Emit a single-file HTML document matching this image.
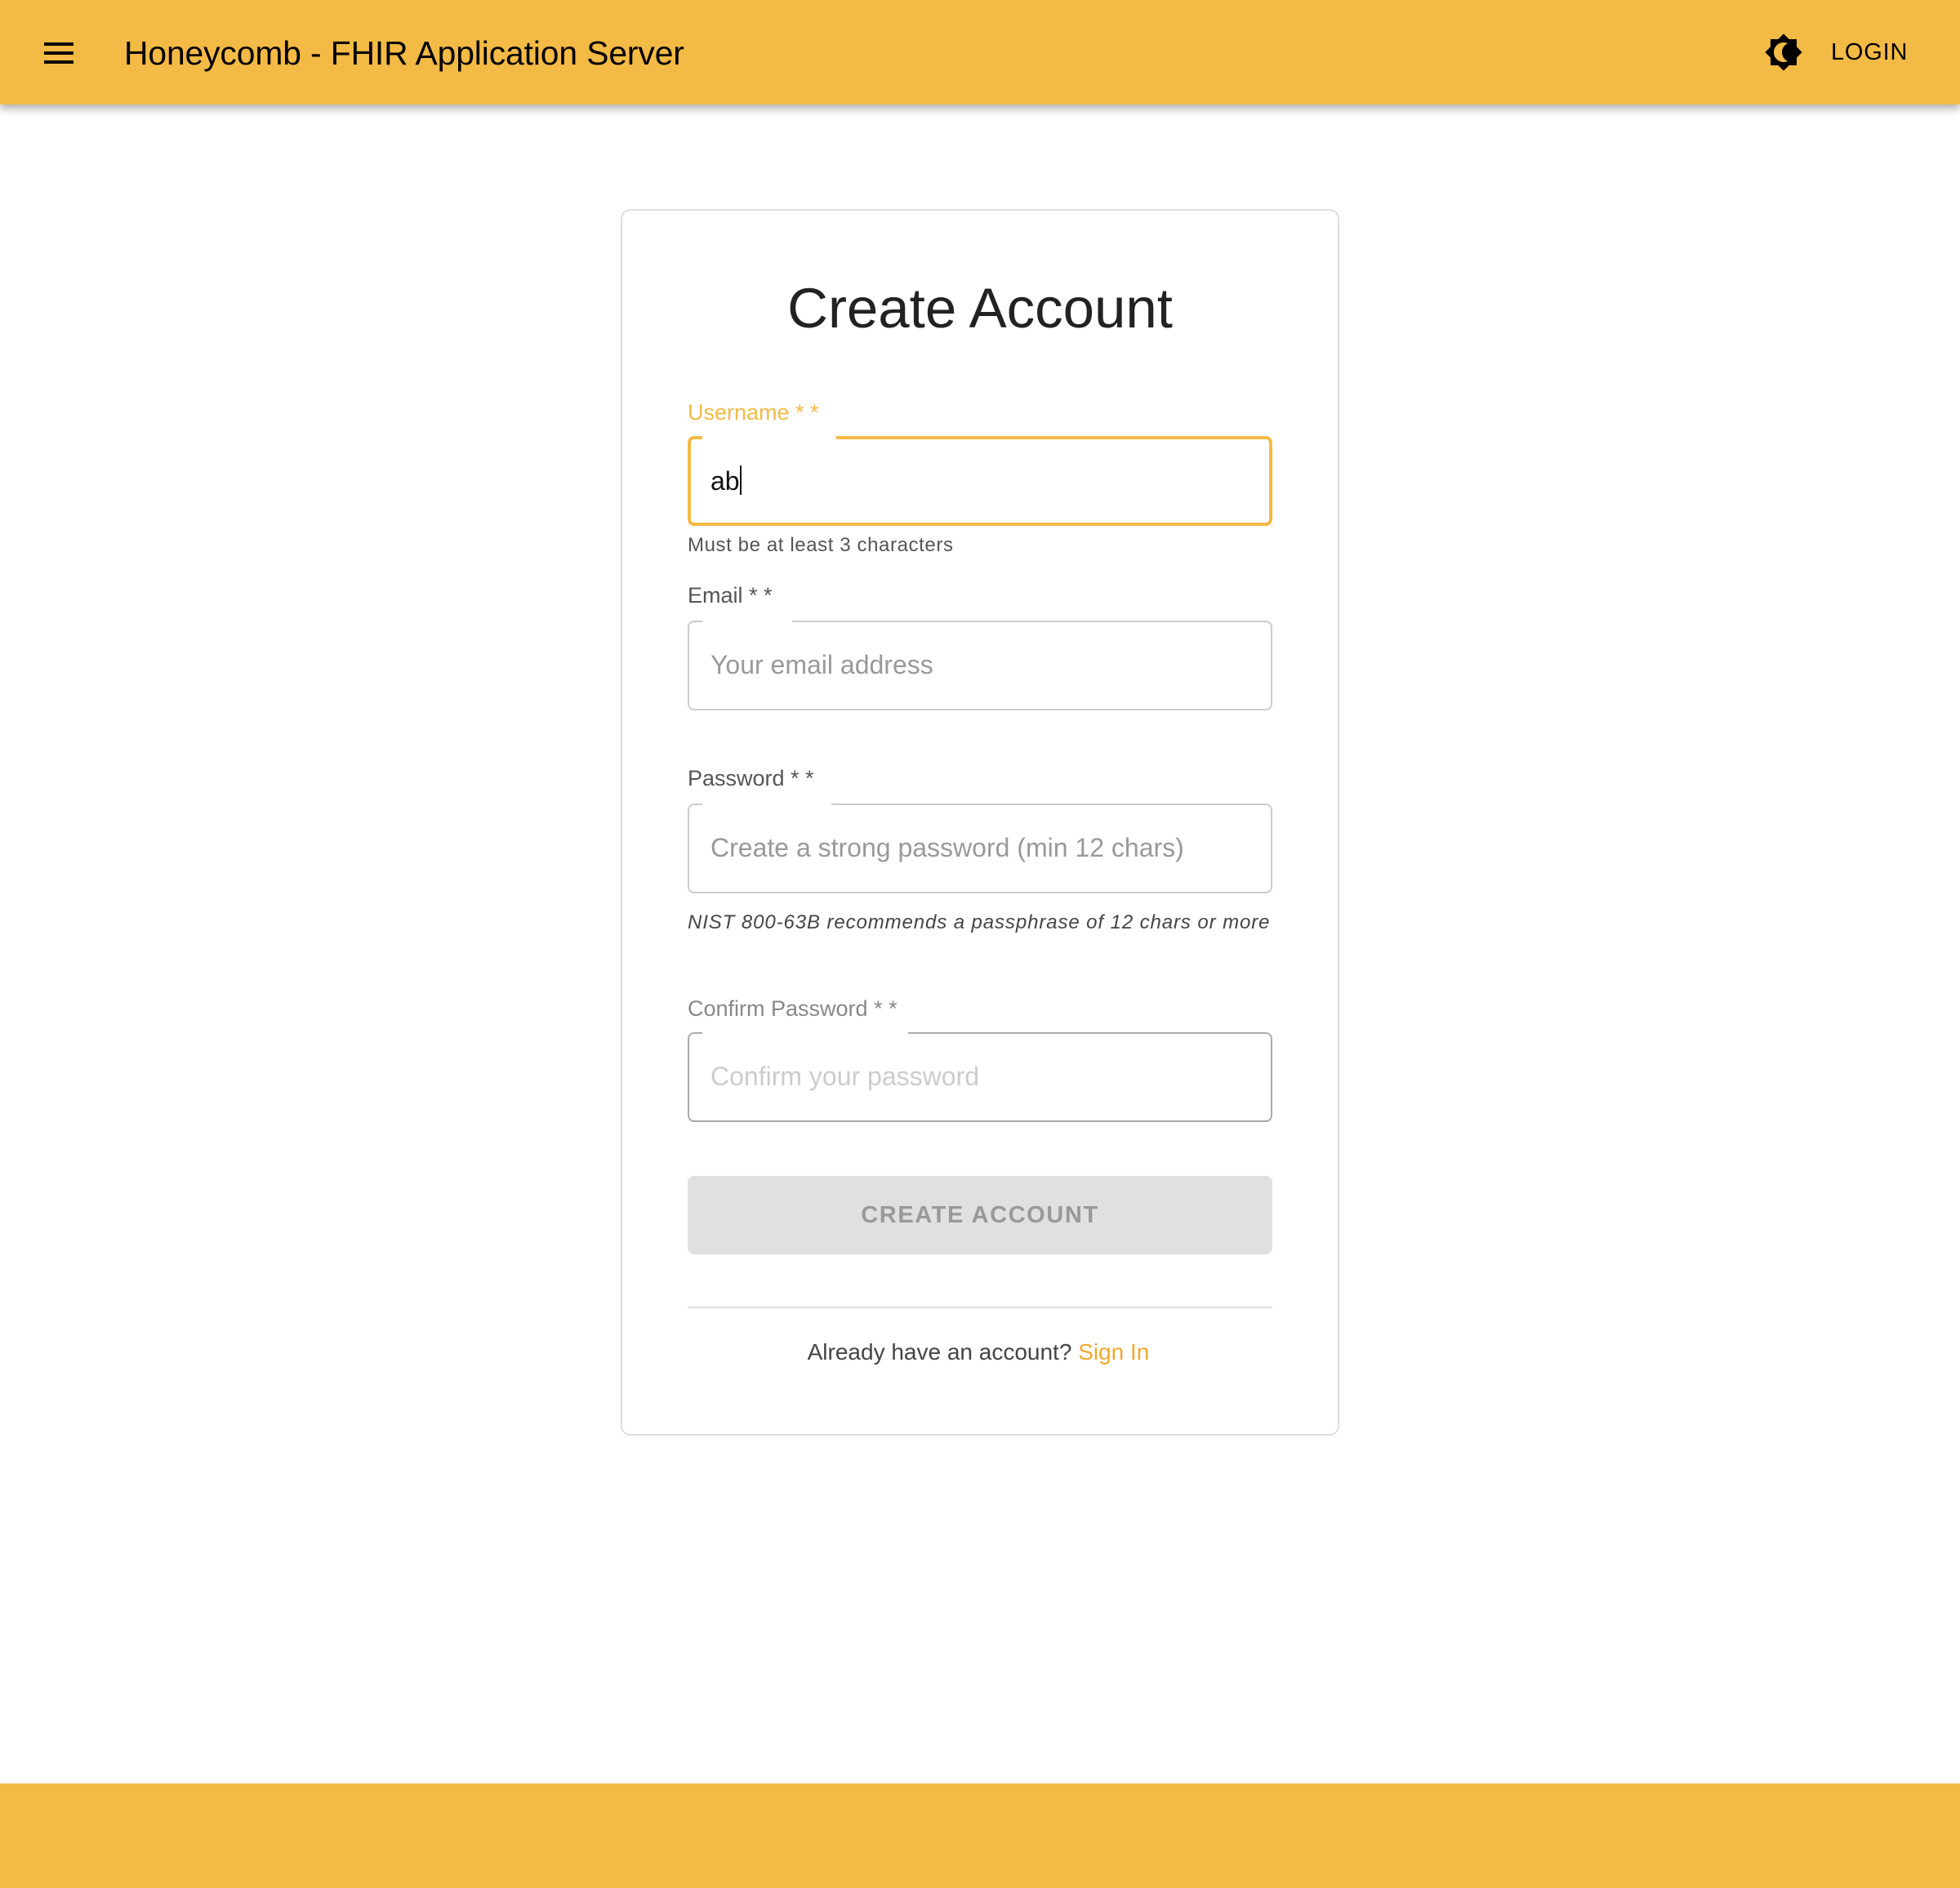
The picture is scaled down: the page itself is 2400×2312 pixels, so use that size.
<!DOCTYPE html>
<html><head><meta charset="utf-8"><style>
html,body{margin:0;padding:0}
body{zoom:2;width:1200px;height:1156px;position:relative;background:#fff;font-family:"Liberation Sans",Arial,sans-serif;overflow:hidden}
.hdr{position:absolute;left:0;top:0;width:1200px;height:64px;background:#F3BA45;box-shadow:0 2px 4px rgba(0,0,0,.2),0 4px 5px rgba(0,0,0,.12)}
.burger{position:absolute;left:27px;top:26px;width:18px}
.burger i{display:block;height:2px;background:#000;margin-bottom:3.5px}
.title{position:absolute;left:76px;top:21px;font-size:20.4px;color:#000;letter-spacing:-.05px}
.login{position:absolute;left:1121px;top:24px;font-size:14.5px;color:#000;letter-spacing:.4px}
.card{position:absolute;left:380px;top:128px;width:438px;height:749px;border:1px solid #ddd;border-radius:6px}
h1{position:absolute;left:0;width:440px;top:169px;margin:0;text-align:center;font-weight:400;font-size:34.5px;color:#222}
.lbl{position:absolute;left:421px;font-size:13.5px;color:#555}
.box{position:absolute;left:421px;border:1px solid #ccc;border-radius:4px;box-sizing:border-box;width:358px;height:55px}
.box .gap{position:absolute;left:8px;top:-3px;height:5px;background:#fff}
.box span{position:absolute;left:13px;top:17px;font-size:16px;color:#999}
.help{position:absolute;left:421px;font-size:12px;color:#555;letter-spacing:.3px}
.btn{position:absolute;left:421px;top:720px;width:358px;height:48px;background:#e0e0e0;border-radius:4px;text-align:center;line-height:48px;font-size:14.5px;font-weight:700;color:#999;letter-spacing:.8px}
.hr{position:absolute;left:421px;top:800px;width:358px;height:1px;background:#ddd}
.foot{position:absolute;left:0;top:1092px;width:1200px;height:64px;background:#F3BA45}
</style></head><body>
<div class="hdr">
<div class="burger"><i></i><i></i><i></i></div>
<div class="title">Honeycomb - FHIR Application Server</div>
<svg style="position:absolute;left:1080px;top:20px" width="24" height="24" viewBox="0 0 24 24"><path d="M20 8.69V4h-4.69L12 .69 8.69 4H4v4.69L.69 12 4 15.310V20h4.69L12 23.31 15.31 20H20v-4.69L23.31 12 20 8.69zM12 18c-.89 0-1.740-.2-2.5-.55C11.56 16.5 13 14.42 13 12s-1.44-4.5-3.5-5.45C10.26 6.2 11.11 6 12 6c3.31 0 6 2.69 6 6s-2.69 6-6 6z" fill="#000" transform="translate(24,0) scale(-1,1)"/></svg>
<div class="login">LOGIN</div>
</div>
<div class="card"></div>
<h1 style="left:380px">Create Account</h1>

<div class="lbl" style="top:245px;color:#F3BA45">Username * *</div>
<div class="box" style="top:267px;border:2px solid #F3BA45"><div class="gap" style="left:7px;width:82px"></div><span style="color:#111;left:12px;top:16px">ab<b style="display:inline-block;width:1px;height:18px;background:#111;vertical-align:-3px;font-weight:400"></b></span></div>
<div class="help" style="top:327px">Must be at least 3 characters</div>

<div class="lbl" style="top:357px">Email * *</div>
<div class="box" style="top:380px"><div class="gap" style="width:55px"></div><span>Your email address</span></div>

<div class="lbl" style="top:469px">Password * *</div>
<div class="box" style="top:492px"><div class="gap" style="width:79px"></div><span>Create a strong password (min 12 chars)</span></div>
<div class="help" style="top:558px;font-style:italic;color:#444;letter-spacing:.45px">NIST 800-63B recommends a passphrase of 12 chars or more</div>

<div class="lbl" style="top:610px;color:#888">Confirm Password * *</div>
<div class="box" style="top:632px;border-color:#aaa"><div class="gap" style="width:126px"></div><span style="color:#ccc">Confirm your password</span></div>

<div class="btn">CREATE ACCOUNT</div>
<div class="hr"></div>
<div style="position:absolute;left:379px;width:440px;top:820px;text-align:center;font-size:14px;color:#444">Already have an account? <span style="color:#F0A830">Sign In</span></div>
<div class="foot"></div>
</body></html>
